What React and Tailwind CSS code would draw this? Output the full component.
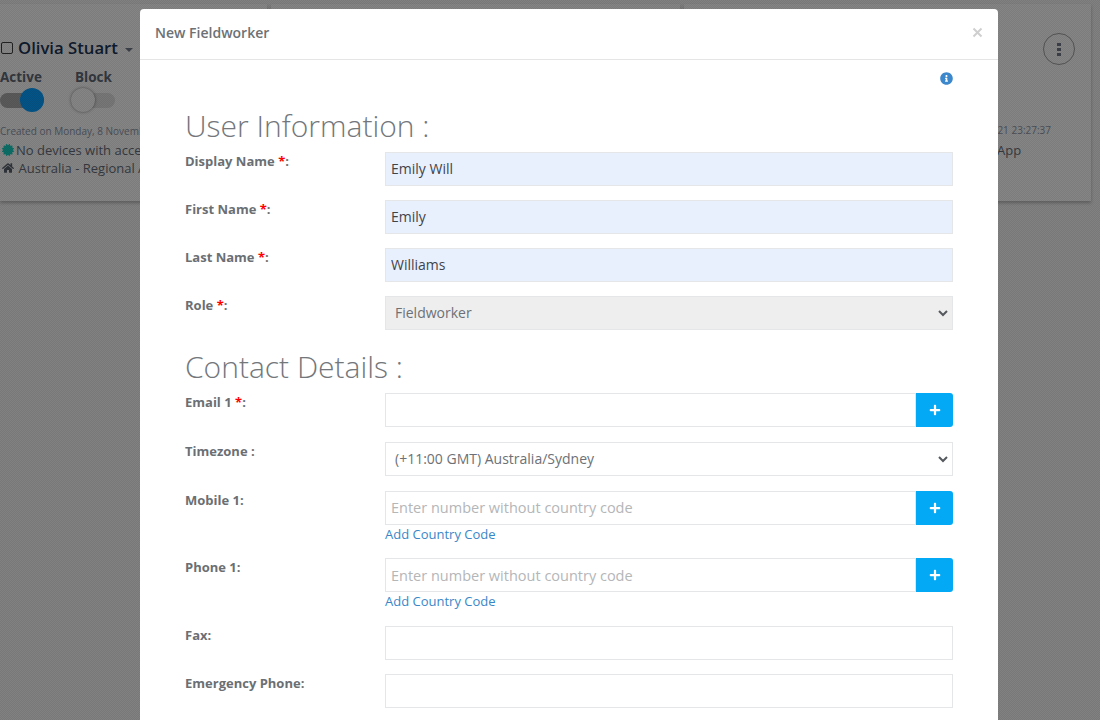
import React from "react";
import { FaInfoCircle, FaHome, FaPlus, FaCertificate } from "react-icons/fa";

function Label({ text, req, w }) {
  return (
    <label className="w-[200px] shrink-0 text-[13px] leading-[18px] font-bold text-[#6b6f73]">
      {text}
      {req && <span className="text-[#ff0000]"> *</span>}
      {w}
    </label>
  );
}

function Field({ value, placeholder, fill }) {
  return (
    <input
      readOnly
      value={value || ""}
      placeholder={placeholder}
      className={`h-[34px] w-full border border-[#e4e6e8] pl-[5px] pr-[5px] pb-[2px] text-[14px] text-[#3f444a] outline-none placeholder:text-[#b4b6b8] ${fill ? "bg-[#e8f0fe]" : "bg-white"}`}
    />
  );
}

function Row({ label, req, colon = ":", children, mb = "mb-[14px]" }) {
  return (
    <div className={`flex ${mb}`}>
      <Label text={label} req={req} w={colon} />
      <div className="w-[568px]">{children}</div>
    </div>
  );
}

function Plus({ value, placeholder, link, raised }) {
  return (
    <div>
      <div className="flex h-[34px]">
        <input
          readOnly
          value={value || ""}
          placeholder={placeholder}
          className={`h-[34px] flex-1 min-w-0 border border-[#e4e6e8] bg-white px-[5px] text-[14.5px] text-[#3f444a] outline-none placeholder:text-[#b4b6b8] ${raised ? "pb-[2px]" : ""}`}
        />
        <button className="flex h-[34px] w-[37px] items-center justify-center rounded-r-[3px] bg-[#03a9f4] text-white">
          <FaPlus className="text-[12px]" />
        </button>
      </div>
      {link && <a className="mb-[2px] block text-[13px] leading-[18px] text-[#3a87c8]">Add Country Code</a>}
    </div>
  );
}

function Select({ value, disabled }) {
  return (
    <div className={`relative h-[34px] border border-[#e4e6e8] ${disabled ? "bg-[#eeeeee]" : "bg-white"}`}>
      <div className="pl-[9px] text-[14px] leading-[32px] text-[#6d7176]">{value}</div>
      <svg className="absolute right-[4px] top-[12px]" width="10" height="8" viewBox="0 0 10 8" fill="none">
        <path d="M1 2 L5 6 L9 2" stroke="#55595e" strokeWidth="2" />
      </svg>
    </div>
  );
}

export default function App() {
  return (
    <div className="relative h-[720px] w-[1100px] overflow-hidden bg-[#818181] font-['Open_Sans',sans-serif]">
      {/* page behind the backdrop */}
      <div className="flex gap-[4px] pt-[4px] pr-[9px]">
        <div className="relative h-[197px] w-[267px] overflow-hidden bg-[#858585] shadow-[0_2px_3px_rgba(0,0,0,0.25)]">
          <div className="mt-[33px] flex items-center">
            <span className="ml-[1px] h-[12px] w-[12px] rounded-[2px] border border-[#222]" />
            <span className="ml-[5px] text-[16.7px] leading-[22px] font-semibold text-[#0f1a2e]">Olivia Stuart</span>
            <span className="ml-[7px] mt-[3px] border-x-[4px] border-t-[4px] border-x-transparent border-t-[#3c4048]" />
          </div>
          <div className="mt-[9px] flex text-[13.5px] leading-[18px] font-bold text-[#33373e]">
            <span className="w-[75px]">Active</span>
            <span>Block</span>
          </div>
          <div className="mt-[2px] flex h-[24px] items-center">
            <div className="relative h-[15px] w-[44px] rounded-full bg-[#5a5a5a]">
              <span className="absolute -top-[4.5px] left-[20px] h-[24px] w-[24px] rounded-full bg-[#045488]" />
            </div>
            <div className="relative ml-[27px] h-[15px] w-[44px] rounded-full bg-[#777777]">
              <span className="absolute -top-[4.5px] left-0 h-[24px] w-[24px] rounded-full bg-[#858585] shadow-[0_0_3px_rgba(0,0,0,0.45)]" />
            </div>
          </div>
          <div className="mt-[12px] whitespace-nowrap text-[10px] leading-[14px] text-[#4a4f58]">Created on Monday, 8 November 2021</div>
          <div className="mt-[3px] flex items-center whitespace-nowrap text-[13px] leading-[18px] text-[#35393f]">
            <FaCertificate className="ml-[2px] mr-[2px] text-[12px] text-[#0c6e66]" />
            No devices with access
          </div>
          <div className="flex items-center whitespace-nowrap text-[13px] leading-[18px] text-[#35393f]">
            <FaHome className="ml-[2px] mr-[4.5px] text-[12px] text-[#2f333a]" />
            Australia - Regional Area
          </div>
        </div>
        <div className="h-[197px] w-[409px] bg-[#858585] shadow-[0_2px_3px_rgba(0,0,0,0.25)]" />
        <div className="relative h-[197px] flex-1 bg-[#858585] shadow-[0_2px_3px_rgba(0,0,0,0.25)]">
          <div className="absolute right-[16px] top-[29px] flex h-[32px] w-[32px] flex-col items-center justify-center gap-[2px] rounded-full border border-[#555555]">
            <span className="h-[3px] w-[4px] bg-[#3c4048]" />
            <span className="h-[3px] w-[4px] bg-[#3c4048]" />
            <span className="h-[3px] w-[4px] bg-[#3c4048]" />
          </div>
          <div className="absolute right-[40px] top-[119px] text-[10px] leading-[14px] text-[#4a4f58]">21 23:27:37</div>
          <div className="absolute left-[313px] top-[137px] text-[13px] leading-[18px] text-[#35393f]">App</div>
        </div>
      </div>

      {/* dotted backdrop */}
      <div className="absolute inset-0 bg-[repeating-conic-gradient(rgba(0,0,0,0.07)_0_25%,transparent_0_50%)] bg-[length:2px_2px]" />

      {/* modal */}
      <div className="absolute left-[140px] top-[9px] w-[858px] rounded-t-[4px] bg-white pb-[40px]">
        <div className="relative h-[51px] border-b border-[#e5e5e5] pl-[15px] pt-[14px]">
          <h4 className="text-[14px] leading-[20px] font-semibold text-[#6d7175]">New Fieldworker</h4>
          <svg className="absolute right-[15px] top-[18px]" width="11" height="11" viewBox="0 0 11 11">
            <path d="M1.5 1.5 L9.5 9.5 M9.5 1.5 L1.5 9.5" stroke="#cfcfcf" strokeWidth="2" />
          </svg>
        </div>
        <div className="pl-[45px] pr-[45px]">
          <div className="flex justify-end pt-[12px]">
            <FaInfoCircle className="text-[13px] text-[#3d87cc]" />
          </div>
          <h3 className="mt-[21px] mb-[6px] text-[30px] leading-[40px] font-light text-[#73777b]">User Information :</h3>
          <Row label="Display Name" req><Field value="Emily Will" fill /></Row>
          <Row label="First Name" req><Field value="Emily" fill /></Row>
          <Row label="Last Name" req><Field value="Williams" fill /></Row>
          <Row label="Role" req mb="mb-0"><Select value="Fieldworker" disabled /></Row>
          <h3 className="mt-[17px] mb-[6px] text-[30px] leading-[40px] font-light text-[#73777b]">Contact Details :</h3>
          <Row label="Email 1" req mb="mb-[15px]"><Plus /></Row>
          <Row label="Timezone " colon=":" mb="mb-[15px]"><Select value="(+11:00 GMT) Australia/Sydney" /></Row>
          <Row label="Mobile 1" mb="mb-[13px]"><Plus placeholder="Enter number without country code" link raised /></Row>
          <Row label="Phone 1" mb="mb-[14px]"><Plus placeholder="Enter number without country code" link /></Row>
          <Row label="Fax"><Field /></Row>
          <Row label="Emergency Phone"><Field /></Row>
        </div>
      </div>
    </div>
  );
}
